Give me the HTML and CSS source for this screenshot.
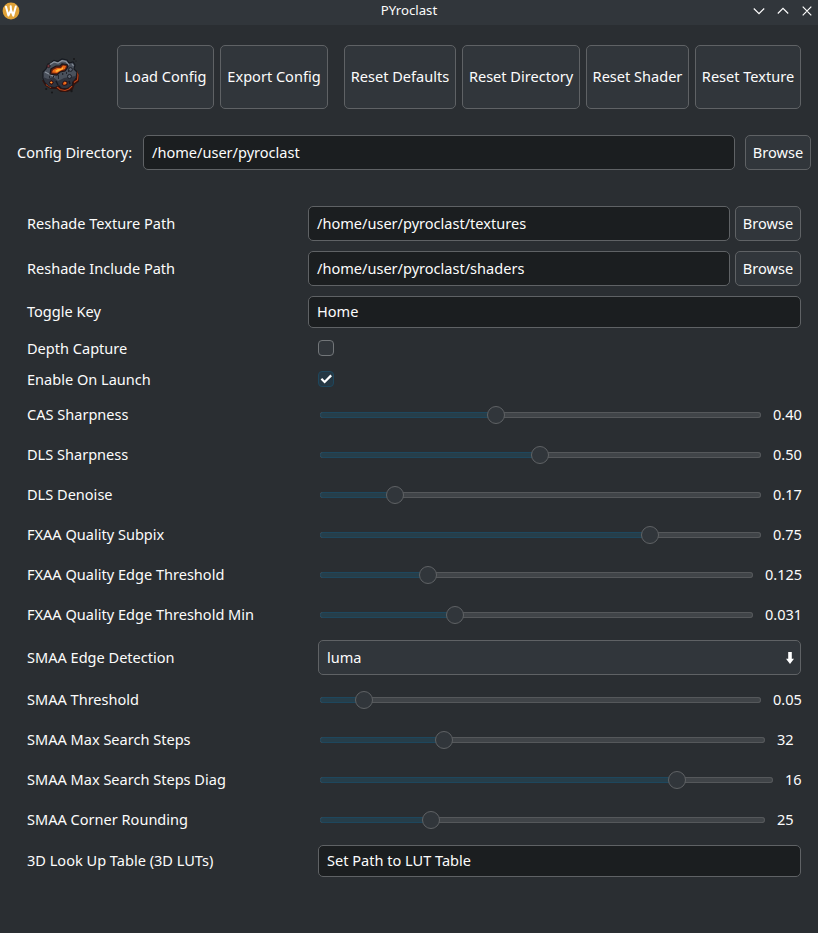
FILE: index.html
```html
<!DOCTYPE html>
<html lang="en">
<head>
<meta charset="utf-8">
<title>PYroclast</title>
<link rel="stylesheet" href="styles.css">
</head>
<body>
<header class="titlebar">
  <svg class="app-icon" width="18" height="18" viewBox="0 0 18 18"><circle cx="9" cy="9" r="8.4" fill="#dfa238"/><path d="M4 4.8 6.4 13.6 9 8 11.3 13.6 13.8 4.4M8.7 4.2 9 8" fill="none" stroke="#fff" stroke-width="2" stroke-linejoin="round" stroke-linecap="round"/></svg>
  <h1 class="title">PYroclast</h1>
  <svg class="controls" width="60" height="12" viewBox="0 0 60 12" fill="none" stroke="#fcfcfc" stroke-width="1.2"><path d="M.8 3.5 6 8.7 11.2 3.5M24.8 8.5 30 3.3 35.2 8.5M49.7 1.7 58.3 10.3M58.3 1.7 49.7 10.3"/></svg>
</header>
<main>
  <div class="toolbar">
    <svg class="logo" width="42" height="40" viewBox="0 0 42 40">
      <path d="M35 14 37 18 37 24 33 27 31 32 26 34 20 34 16 31 10 31 5 28 2 23" fill="#32120f" stroke="#31130f" stroke-width="2"/>
      <path d="M35.5 14 37 18 36.5 23 33 25.5M31 29 28 32 24 33.5 19 32.5 16 30M10 30.5 5 27.5" fill="none" stroke="#b8431a" stroke-width="1.2"/>
      <path d="M7 7 10 6 13 3.5 17 4.5 21 2 26 3 28 6 32 5 34 8 33 12 36 15 35 21 31 24 31 28 26 31 21 31 18 28 14 30 8 29 4 25 2 21 2 15 5 12Z" fill="#4a515c" stroke="#171a20" stroke-width="1.2"/>
      <path d="M2 20 7 22 12 20 17 24 23 21 29 20 35 19 34 22 31 25 31 28 26 31 21 31 18 28 14 30 8 29 4 25Z" fill="#30343e"/>
      <path d="M7 10 9 7.5 13 5 17 6 21 3.7 25 4.5 28 8M4 15 8 17 14 20M31 7 32.5 9" fill="none" stroke="#8a929d" stroke-width="1.2"/>
      <path d="M9 17 10 12 15 9 19 9 21 7 26 7.5 27 10 24 14 19 15 16 18Z" fill="#64200f" stroke="#1b171a" stroke-width="1.2"/>
      <path d="M11 15.5 12 13 16 11 20 11 22 8.5 25 9 24 12 20 13.5 16 16Z" fill="#ed6a16"/>
      <path d="M14 14 17 12 20 12 22 10 22 12 18 14 16 15Z" fill="#ffb83b"/>
      <path d="M8 26 10 23.5 12.5 25 11 27.5ZM21 27 23 24 26 24.5 26 27.5 23 28.5Z" fill="#d94b12" stroke="#241316"/>
      <path d="M9.5 25.5h1.5M23.3 26h1.7" stroke="#ffa52f" stroke-width="1.2"/>
      <path d="M15 24 17 28M28 24 29 27M12 19.5h1.3M17 19h1M21 17h1.3M25 16h1M27 14h1M8 20h1M17 21h1" stroke="#171a21" stroke-width="1.4"/>
      <g fill="#5b626f" stroke="#1b1e26"><circle cx="29.5" cy="12.5" r="1.9"/><circle cx="28.5" cy="19.5" r="2"/></g>
      <circle cx="7.5" cy="9" r="1.6" fill="#74353a" stroke="#251b20"/>
      <g fill="#171719"><circle cx="5.2" cy="32" r="1.1"/><circle cx="11" cy="35.5" r="1"/><circle cx="30.5" cy="34" r="1.2"/><circle cx="33" cy="2" r="1"/><circle cx="35" cy="4" r=".6"/></g>
    </svg>
    <button class="btn tool w97">Load Config</button>
    <button class="btn tool w108 group-end">Export Config</button>
    <button class="btn tool w112">Reset Defaults</button>
    <button class="btn tool w118">Reset Directory</button>
    <button class="btn tool w103">Reset Shader</button>
    <button class="btn tool w106">Reset Texture</button>
  </div>
  <div class="config"><span class="config-label">Config Directory:</span><div class="field grow">/home/user/pyroclast</div><button class="btn browse">Browse</button></div>
  <div class="form">
    <div class="row tall"><span class="label">Reshade Texture Path</span><div class="field grow">/home/user/pyroclast/textures</div><button class="btn browse">Browse</button></div>
    <div class="row tall"><span class="label">Reshade Include Path</span><div class="field grow">/home/user/pyroclast/shaders</div><button class="btn browse">Browse</button></div>
    <div class="row entry"><span class="label">Toggle Key</span><div class="field grow">Home</div></div>
    <div class="row check"><span class="label wide">Depth Capture</span><span class="box"></span></div>
    <div class="row check"><span class="label wide">Enable On Launch</span><span class="box on"><svg width="14" height="14" viewBox="0 0 14 14"><path d="M2.4 6.8 5.6 10 12.2 3.4" fill="none" stroke="#fff" stroke-width="2.2"/></svg></span></div>
    <div class="row slide"><span class="label wide">CAS Sharpness</span><div class="track"><div class="fill" style="width:176px"></div></div><span class="value v28">0.40</span></div>
    <div class="row slide"><span class="label wide">DLS Sharpness</span><div class="track"><div class="fill" style="width:220px"></div></div><span class="value v28">0.50</span></div>
    <div class="row slide"><span class="label wide">DLS Denoise</span><div class="track"><div class="fill" style="width:75px"></div></div><span class="value v28">0.17</span></div>
    <div class="row slide"><span class="label wide">FXAA Quality Subpix</span><div class="track"><div class="fill" style="width:330px"></div></div><span class="value v28">0.75</span></div>
    <div class="row slide"><span class="label wide">FXAA Quality Edge Threshold</span><div class="track"><div class="fill" style="width:108px"></div></div><span class="value v36">0.125</span></div>
    <div class="row slide"><span class="label wide">FXAA Quality Edge Threshold Min</span><div class="track"><div class="fill" style="width:135px"></div></div><span class="value v36">0.031</span></div>
    <div class="row tall"><span class="label wide">SMAA Edge Detection</span><div class="field combo grow">luma<svg class="arrow" width="10" height="14" viewBox="0 0 10 14"><path d="M3.2 1H6.8V7.8H9L5 13 1 7.8H3.2Z" fill="#fff"/></svg></div></div>
    <div class="row slide"><span class="label wide">SMAA Threshold</span><div class="track"><div class="fill" style="width:44px"></div></div><span class="value v28">0.05</span></div>
    <div class="row slide"><span class="label wide">SMAA Max Search Steps</span><div class="track"><div class="fill" style="width:124px"></div></div><span class="value v24">32</span></div>
    <div class="row slide"><span class="label wide">SMAA Max Search Steps Diag</span><div class="track"><div class="fill" style="width:357px"></div></div><span class="value v16">16</span></div>
    <div class="row slide"><span class="label wide">SMAA Corner Rounding</span><div class="track"><div class="fill" style="width:111px"></div></div><span class="value v24">25</span></div>
    <div class="row entry"><span class="label wide">3D Look Up Table (3D LUTs)</span><div class="field grow">Set Path to LUT Table</div></div>
  </div>
</main>
</body>
</html>
```
FILE: styles.css
```css
*, *::after { box-sizing: border-box; }
body {
  margin: 0;
  height: 933px;
  overflow: hidden;
  background: #2a2e32;
  color: #fcfcfc;
  font: 14.56px/20px "Noto Sans", sans-serif;
  white-space: nowrap;
}
.titlebar {
  display: grid;
  grid-template-columns: 100px 1fr 97px;
  align-items: center;
  height: 25px;
  padding: 0 5px 2px 2px;
  background: #31363b;
}
.app-icon { margin-bottom: 1px; }
.title { margin: 0; padding-bottom: 3px; font-size: 13.2px; font-weight: 400; text-align: center; }
.controls { justify-self: end; margin-bottom: 1px; }
.toolbar { display: flex; gap: 6px; height: 64px; margin: 20px 17px 0 41px; }
.logo { margin: 12px 28px 0 0; flex: none; }
.btn {
  flex: none;
  padding: 0 0 2px;
  border: 1px solid #5f6265;
  border-radius: 5px;
  background: #31363b;
  color: inherit;
  font: inherit;
}
.group-end { margin-right: 10px; }
.w97 { width: 97px; }
.w103 { width: 103px; }
.w106 { width: 106px; }
.w108 { width: 108px; }
.w112 { width: 112px; }
.w118 { width: 118px; }
.config { display: flex; align-items: center; gap: 10px; height: 35px; margin: 26px 7px 0 17px; }
.config-label { width: 116px; padding-bottom: 2px; }
.field {
  display: flex;
  align-items: center;
  height: 100%;
  padding: 0 8px 2px;
  border: 1px solid #5f6265;
  border-radius: 5px;
  background: #1b1e20;
}
.grow { flex: 1; }
.browse { width: 66px; height: 35px; }
.form { display: flex; flex-direction: column; gap: 10px; margin: 36px 17px 0 27px; }
.row { display: flex; align-items: center; }
.tall { height: 35px; }
.entry { height: 32px; }
.check { height: 21px; padding-bottom: 1px; }
.slide { height: 30px; }
.label { width: 281px; flex: none; padding-bottom: 2px; }
.wide { width: 291px; }
.check .label { padding-bottom: 0; }
.value { padding-bottom: 2px; }
.row .browse { margin-left: 5px; }
.box {
  width: 16px;
  height: 16px;
  border: 1px solid #727679;
  border-radius: 4px;
  background: #31363b;
}
.on { border-color: #1e475d; background: #253743; }
.box svg { display: block; }
.combo { justify-content: space-between; padding-right: 5px; background: #31363b; }
.arrow { margin-top: 2px; }
.track {
  flex: 1;
  height: 6px;
  margin: 0 12px 0 2px;
  border-radius: 3px;
  background: #404448;
  box-shadow: inset 0 0 0 1px #55585b;
}
.fill {
  position: relative;
  height: 6px;
  border: 1px solid #1e475d;
  border-radius: 3px;
  background: #263e4a;
}
.fill::after {
  content: "";
  position: absolute;
  right: -10px;
  top: -7px;
  width: 18px;
  height: 18px;
  border: 1px solid #5f6265;
  border-radius: 50%;
  background: #31363b;
}
.v16 { width: 16px; }
.v24 { width: 24px; }
.v28 { width: 28px; }
.v36 { width: 36px; }
```
